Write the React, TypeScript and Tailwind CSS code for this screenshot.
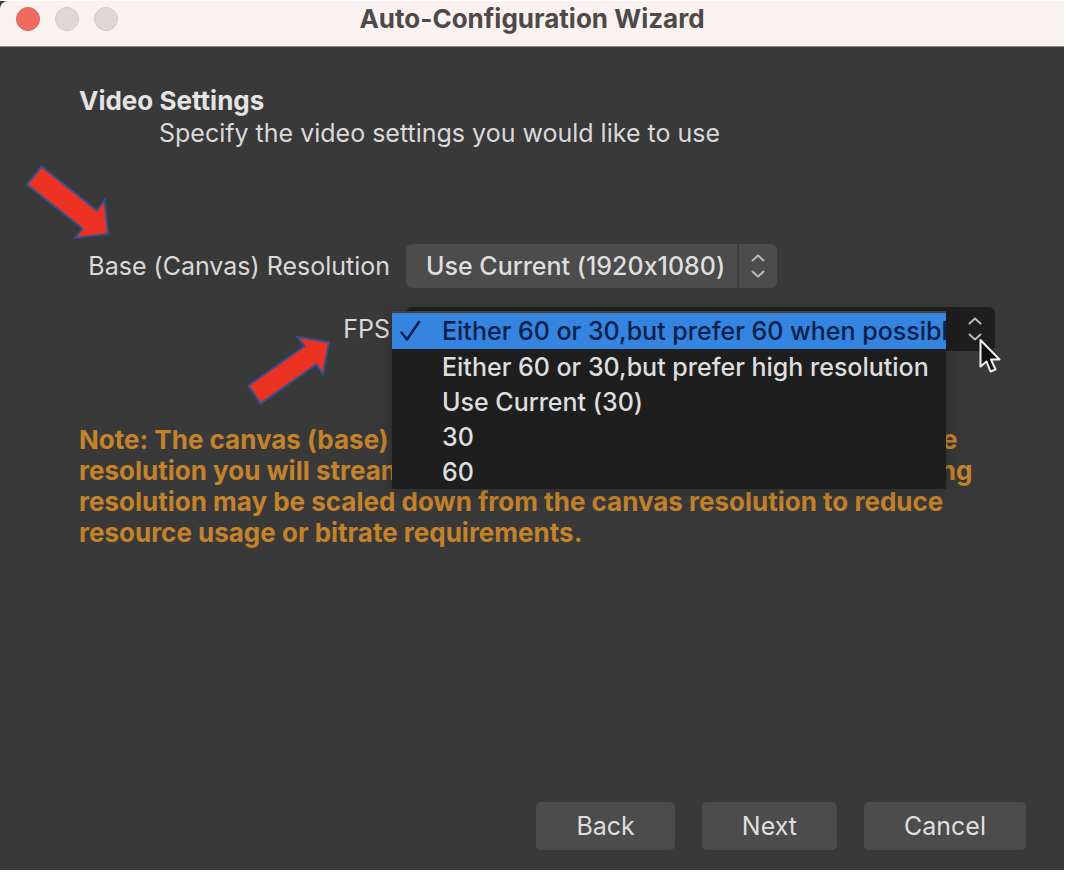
import { useState } from "react";
import type { ReactNode } from "react";

const fpsOptions = [
  "Either 60 or 30,but prefer 60 when possible",
  "Either 60 or 30,but prefer high resolution",
  "Use Current (30)",
  "30",
  "60",
];

const noteLines = [
  "Note: The canvas (base) resolution is not necessarily the same as the",
  "resolution you will stream or record with. Your actual stream/recording",
  "resolution may be scaled down from the canvas resolution to reduce",
  "resource usage or bitrate requirements.",
];

function Stepper() {
  return (
    <svg
      className="pointer-events-none h-6 w-4"
      viewBox="0 0 16 24"
      fill="none"
      stroke="#b9b9b9"
      strokeWidth="2"
      strokeLinecap="round"
      strokeLinejoin="round"
      aria-hidden="true"
    >
      <path d="M2.5 6.5 8 1.5l5.500 5M2.500 17.500l5.500 5 5.500-5" />
    </svg>
  );
}

function Check() {
  return (
    <svg
      className="h-6 w-6 shrink-0"
      viewBox="0 0 24 24"
      fill="none"
      stroke="#06204a"
      strokeWidth="2.400"
      strokeLinecap="round"
      strokeLinejoin="round"
      aria-hidden="true"
    >
      <path d="M3.500 13.500 9 20.500 21 3" />
    </svg>
  );
}

function TitleBar() {
  return (
    <header className="grid h-[46px] grid-cols-[1fr_auto_1fr] items-start rounded-tl-lg border-b border-[#8c8483] bg-[#faf1f1]">
      <div className="flex gap-[15px] pt-[6px] pl-4">
        <button type="button" aria-label="Close" className="size-6 rounded-full border border-[#d9665c] bg-[#ee6a5f]" />
        <button type="button" aria-label="Minimize" className="size-6 rounded-full border border-[#d3cbcb] bg-[#dfd7d7]" />
        <button type="button" aria-label="Zoom" className="size-6 rounded-full border border-[#d3cbcb] bg-[#dfd7d7]" />
      </div>
      <h1 className="text-[26px] leading-9 font-bold text-[#4d4949]">Auto-Configuration Wizard</h1>
    </header>
  );
}

function FooterButton({ children }: { children: ReactNode }) {
  return (
    <button type="button" className="h-12 rounded-[5px] bg-[#4c4c4c] px-10 text-[25px] text-[#dfdfdf]">
      {children}
    </button>
  );
}

export default function App() {
  const [fps, setFps] = useState(fpsOptions[0]);

  return (
    <div className="bg-white pt-px pr-0.5 font-['Inter',sans-serif] [font-feature-settings:'calt'_0]">
      <div className="relative flex min-h-[869px] flex-col bg-[#393939] text-[25px] leading-8 text-[#d9d9d9]">
        <TitleBar />

        <main className="flex-1 pt-[38px] pl-[79px]">
          <h2 className="text-[26px] font-bold text-[#e4e4e4]">Video Settings</h2>
          <p className="pl-20">Specify the video settings you would like to use</p>

          <div className="mt-[95px] grid grid-cols-[311px_auto] items-center justify-start gap-x-4 gap-y-[19px]">
            <label htmlFor="resolution" className="text-right">
              Base (Canvas) Resolution
            </label>
            <div className="relative flex w-[371px]">
              <select
                id="resolution"
                className="h-11 w-full appearance-none rounded-md bg-[#4c4c4c] pl-5 font-medium text-[#dedede]"
              >
                <option>Use Current (1920x1080)</option>
              </select>
              <span className="pointer-events-none absolute inset-y-0 right-0 flex w-10 items-center justify-center border-l-2 border-[#3f3f3f]">
                <Stepper />
              </span>
            </div>

            <label htmlFor="fps" className="text-right">
              FPS
            </label>
            <div className="relative flex w-[589px]">
              <select
                id="fps"
                value={fps}
                onChange={(e) => setFps(e.target.value)}
                className="h-11 w-full appearance-none rounded-md bg-[#1e1e1e] pl-5 text-transparent"
              >
                {fpsOptions.map((o) => (
                  <option key={o}>{o}</option>
                ))}
              </select>
              <span className="pointer-events-none absolute inset-y-0 right-0 flex w-10 items-center justify-center">
                <Stepper />
              </span>

              <ul
                role="listbox"
                aria-label="FPS"
                className="absolute top-1 -left-[14px] z-10 w-[554px] overflow-hidden border-t-2 border-[#4a4037] bg-[#1e1e1e] font-medium shadow-[0_2px_14px_rgba(0,0,0,0.25)]"
              >
                {fpsOptions.map((o) => (
                  <li
                    key={o}
                    role="option"
                    aria-selected={o === fps}
                    onClick={() => setFps(o)}
                    className={
                      o === fps
                        ? "flex h-9 items-center gap-5 bg-[#3584df] pl-1.5 whitespace-nowrap text-[#06204a]"
                        : "flex h-[35px] items-center pl-[50px] whitespace-nowrap text-[#dedede]"
                    }
                  >
                    {o === fps && <Check />}
                    {o}
                  </li>
                ))}
              </ul>
            </div>
          </div>

          <p className="mt-[73px] text-[26px] leading-[31px] font-bold text-[#c4832b]">
            {noteLines.map((line) => (
              <span key={line} className="block whitespace-nowrap">
                {line}
              </span>
            ))}
          </p>
        </main>

        <footer className="flex justify-end gap-[27px] pr-[38px] pb-5">
          <FooterButton>Back</FooterButton>
          <FooterButton>Next</FooterButton>
          <FooterButton>Cancel</FooterButton>
        </footer>

        <svg
          className="pointer-events-none absolute top-0 left-0 z-20"
          width="1064"
          height="500"
          viewBox="0 1 1064 500"
          aria-hidden="true"
        >
          <g fill="#ec3323" stroke="#36508f" strokeWidth="2">
            <path d="M41.500 166.500 97 210.500 104.500 200 108 234 75 238 82.500 228.500 27 184.500Z" />
            <path d="M248.500 385.500 304.500 346 297.500 337 329 342 323 374 316.500 364.500 260.500 403.500Z" />
          </g>
          <path
            d="M980.500 340V366.500L986.500 361.500 990.500 371.500 995.500 369.500 991 359.500H999.500Z"
            fill="#101010"
            stroke="#f0f0f0"
            strokeWidth="2"
            strokeLinejoin="round"
          />
        </svg>
      </div>
    </div>
  );
}
